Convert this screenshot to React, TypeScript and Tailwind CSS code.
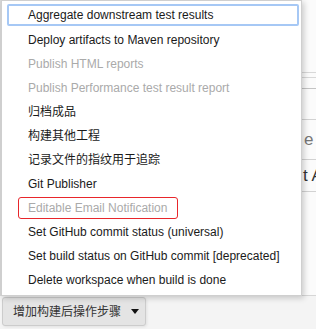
import React from 'react';

const items = [
  { label: 'Aggregate downstream test results', focused: true },
  { label: 'Deploy artifacts to Maven repository' },
  { label: 'Publish HTML reports', disabled: true },
  { label: 'Publish Performance test result report', disabled: true },
  { label: '归档成品' },
  { label: '构建其他工程' },
  { label: '记录文件的指纹用于追踪' },
  { label: 'Git Publisher' },
  { label: 'Editable Email Notification', disabled: true, marked: true },
  { label: 'Set GitHub commit status (universal)' },
  { label: 'Set build status on GitHub commit [deprecated]' },
  { label: 'Delete workspace when build is done' },
];

function MenuItem({ label, focused, disabled, marked }: { label: string; focused?: boolean; disabled?: boolean; marked?: boolean }) {
  let box = 'h-[24px] flex items-center pl-[26px] ';
  if (focused) box = 'h-[22px] mb-[2px] ml-[5px] mr-[2px] flex items-center pl-[19px] border-2 border-[#a6c8f5] rounded-[2px]';
  return (
    <div className={box}>
      {marked ? (
        <div className="h-[22px] -ml-[10px] pl-[9px] w-[160px] flex items-center border border-[#e8262b] rounded-[3px]">
          <span className="text-[12px] text-[#aaaaaa] whitespace-nowrap">{label}</span>
        </div>
      ) : (
        <span className={'text-[12px] whitespace-nowrap ' + (disabled ? 'text-[#aaaaaa]' : 'text-[#1a1a1a]')}>{label}</span>
      )}
    </div>
  );
}

export default function App() {
  return (
    <div
      className="w-[316px] h-[329px] overflow-hidden flex flex-col bg-[#f4f4f4]"
      style={{ fontFamily: '"Liberation Sans", "Noto Sans CJK SC", Arial, sans-serif' }}
    >
      <div className="h-[296px] flex bg-white">
        {/* left edge of the page */}
        <div className="w-[1px] bg-[#d8d8d8]" />

        {/* dropdown menu */}
        <div className="relative z-10 w-[301px] bg-white border border-[#cfcfcf] shadow-[2px_2px_6px_rgba(0,0,0,0.2)] pt-[3px]">
          {items.map((it) => (
            <MenuItem key={it.label} {...it} />
          ))}
        </div>

        {/* part of the config page showing behind */}
        <div className="flex-1 flex flex-col bg-[#fbfbfb] overflow-hidden border-b border-[#d6d6d6]">
          <div className="h-[73px] border-b border-[#d8d8d8]" />
          <div className="h-[5px] border-b border-[#d8d8d8]" />
          <div className="h-[11px] border-b border-[#c4c4c4]" />
          <div className="h-[31px] border-b border-[#d2d2d2]" />
          <div className="h-[40px] border-b border-[#d2d2d2] flex items-center pl-[2px]">
            <span className="text-[17px] text-[#777] whitespace-nowrap">e w</span>
          </div>
          <div className="h-[32px] border-b border-[#d2d2d2] flex items-center pl-[1px]">
            <span className="text-[17px] text-[#333] whitespace-nowrap">t A</span>
          </div>
        </div>
      </div>

      {/* add post-build step button */}
      <div className="pt-[1px] pl-[2px]">
        <div className="w-[144px] h-[29px] flex items-center rounded-[3px] border border-[#cccccc] bg-[#e4e4e4] shadow-[1px_1px_3px_rgba(0,0,0,0.08)]">
          <span className="pl-[10px] text-[12px] text-[#333] whitespace-nowrap">增加构建后操作步骤</span>
          <span className="ml-[10px] w-0 h-0 border-l-[4px] border-r-[4px] border-t-[5px] border-l-transparent border-r-transparent border-t-[#111]" />
        </div>
      </div>
    </div>
  );
}
